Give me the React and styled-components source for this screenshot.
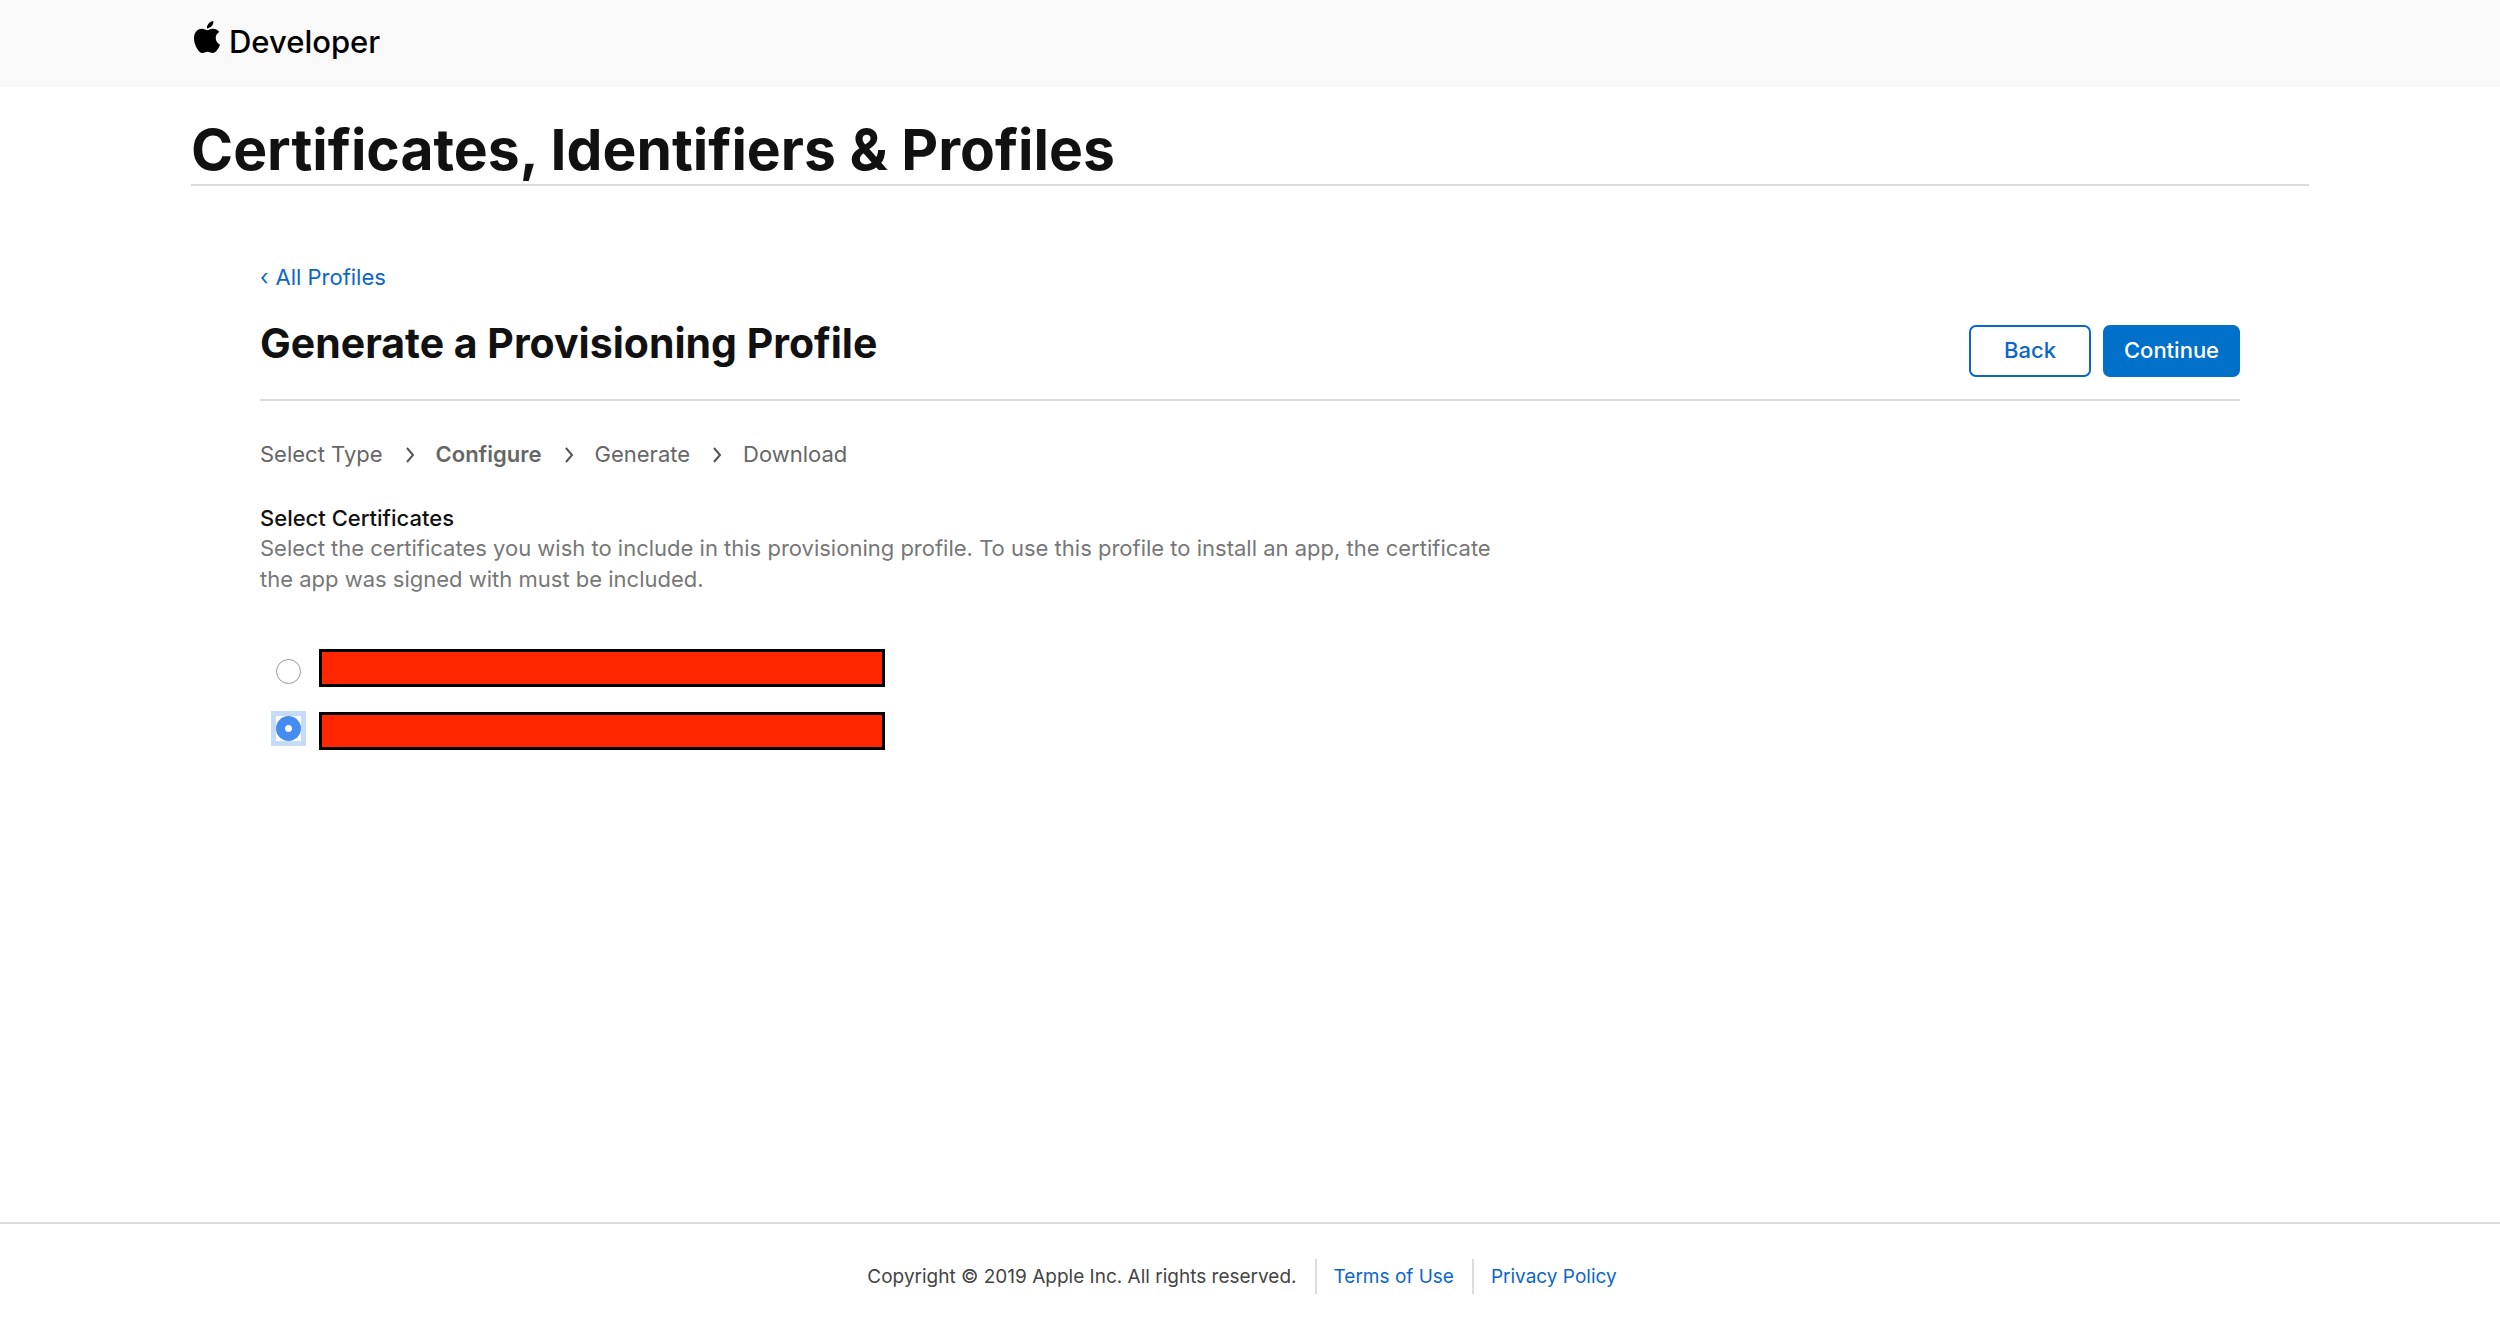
import React, { useState } from 'react';
import styled, { createGlobalStyle, css } from 'styled-components';
import { SiApple } from 'react-icons/si';

const GlobalStyle = createGlobalStyle`
  * {
    box-sizing: border-box;
  }
  body {
    margin: 0;
    background: #fff;
    color: #111;
    font-family: Inter, 'Liberation Sans', sans-serif;
    font-size: 22px;
    line-height: 31px;
  }
`;

const Page = styled.div`
  display: flex;
  flex-direction: column;
  min-height: 100vh;
`;

const Header = styled.header`
  display: flex;
  height: 87px;
  padding: 20px 191px 0;
  background: #f9f9f9;
`;

const Logo = styled.a`
  display: flex;
  align-items: center;
  gap: 6px;
  height: 44px;
  color: #000;
  font-size: 31px;
  font-weight: 500;
  line-height: 44px;
  text-decoration: none;
  svg {
    margin-bottom: 10px;
  }
`;

const Container = styled.div`
  flex: 1;
  padding: 0 191px;
`;

const PageTitle = styled.h1`
  margin: 0;
  padding: 29px 0 0;
  border-bottom: 2px solid #dcdcdc;
  font-size: 57px;
  font-weight: 700;
  line-height: 68px;
`;

const Main = styled.main`
  padding: 76px 69px 0;
`;

const Link = styled.a`
  color: #0b66c9;
  text-decoration: none;
`;

const BackLink = styled(Link)`
  display: inline-flex;
  gap: 7px;
  line-height: 30px;
`;

const Heading = styled.div`
  display: flex;
  justify-content: space-between;
  align-items: flex-start;
  padding: 32px 0 22px;
  border-bottom: 2px solid #dcdcdc;
  h2 {
    margin: 0;
    font-size: 41px;
    font-weight: 700;
    line-height: 36px;
  }
`;

const Buttons = styled.div`
  display: flex;
  gap: 12px;
`;

const Button = styled.button`
  min-width: ${(props) => (props.$primary ? 137 : 122)}px;
  height: 52px;
  padding: 0 18px 2px;
  border: 2px solid #0b66c9;
  border-radius: 7px;
  background: #fff;
  color: #0b66c9;
  font: inherit;
  font-weight: 500;
  ${(props) =>
    props.$primary &&
    css`
      border-color: #0070c9;
      background: #0070c9;
      color: #fff;
    `}
`;

const Steps = styled.ol`
  display: flex;
  align-items: center;
  gap: 23px;
  margin: 0;
  padding: 38px 0 0;
  color: #666;
  list-style: none;
`;

const Step = styled.li`
  display: flex;
  align-items: center;
  gap: 21px;
  font-weight: ${(props) => (props.$active ? 600 : 400)};
`;

const Section = styled.fieldset`
  max-width: 1240px;
  margin: 0;
  padding: 34px 0 0;
  border: 0;
  h3 {
    margin: 0;
    font-size: 22px;
    font-weight: 500;
    line-height: 29px;
  }
  p {
    margin: 0;
    color: #777;
  }
`;

const Certificates = styled.div`
  display: flex;
  align-items: center;
  gap: 18px;
  padding: 54px 0 0 16px;
`;

const Radios = styled.div`
  display: flex;
  flex-direction: column;
  gap: 32px;
`;

const Names = styled.div`
  display: flex;
  flex-direction: column;
  gap: 25px;
`;

const Radio = styled.input`
  appearance: none;
  width: 25px;
  height: 25px;
  margin: 0;
  border: 1px solid #999;
  border-radius: 50%;
  &:checked {
    border: 0;
    background: radial-gradient(circle, #fff 3px, #458cf2 4px);
    outline: 0;
  }
`;

// square focus halo around the round control
const Halo = styled.span`
  display: flex;
  width: 25px;
  height: 25px;
  box-shadow: ${(props) => (props.$active ? '0 0 0 5px #c6dbf8' : 'none')};
`;

const Redacted = styled.label`
  width: 566px;
  height: 38px;
  border: 3px solid #000;
  background: #ff2600;
`;

const Footer = styled.footer`
  display: flex;
  justify-content: center;
  align-items: center;
  height: 106px;
  padding-right: 16px;
  border-top: 2px solid #dcdcdc;
  color: #444;
  font-size: 19px;
`;

const FooterLink = styled(Link)`
  margin-left: 18px;
  padding-left: 17px;
  border-left: 2px solid #ddd;
  line-height: 35px;
`;

const ChevronIcon = () => (
  <svg width="9" height="16" viewBox="0 0 9 16" fill="none" aria-hidden="true">
    <path d="M1 1l6 7-6 7" stroke="#555" strokeWidth="2" />
  </svg>
);

const steps = ['Select Type', 'Configure', 'Generate', 'Download'];
const certificates = ['first', 'second'];

export default function App() {
  const [selected, setSelected] = useState('second');

  return (
    <Page>
      <GlobalStyle />
      <Header>
        <Logo href="#">
          <SiApple size={32} />
          <span>Developer</span>
        </Logo>
      </Header>
      <Container>
        <PageTitle>Certificates, Identifiers &amp; Profiles</PageTitle>
        <Main>
          <BackLink href="#profiles">
            <span>‹</span>
            <span>All Profiles</span>
          </BackLink>
          <Heading>
            <h2>Generate a Provisioning Profile</h2>
            <Buttons>
              <Button type="button">Back</Button>
              <Button type="button" $primary>
                Continue
              </Button>
            </Buttons>
          </Heading>
          <Steps>
            {steps.map((step, index) => (
              <Step key={step} $active={step === 'Configure'}>
                {index > 0 && <ChevronIcon />}
                {step}
              </Step>
            ))}
          </Steps>
          <Section>
            <h3>Select Certificates</h3>
            <p>
              Select the certificates you wish to include in this provisioning profile. To use this
              profile to install an app, the certificate the app was signed with must be included.
            </p>
            <Certificates>
              <Radios>
                {certificates.map((id) => (
                  <Halo key={id} $active={selected === id}>
                    <Radio
                      type="radio"
                      name="certificate"
                      id={id}
                      checked={selected === id}
                      onChange={() => setSelected(id)}
                    />
                  </Halo>
                ))}
              </Radios>
              <Names>
                {certificates.map((id) => (
                  <Redacted key={id} htmlFor={id} />
                ))}
              </Names>
            </Certificates>
          </Section>
        </Main>
      </Container>
      <Footer>
        <span>Copyright © 2019 Apple Inc. All rights reserved.</span>
        <FooterLink href="#terms">Terms of Use</FooterLink>
        <FooterLink href="#privacy">Privacy Policy</FooterLink>
      </Footer>
    </Page>
  );
}
